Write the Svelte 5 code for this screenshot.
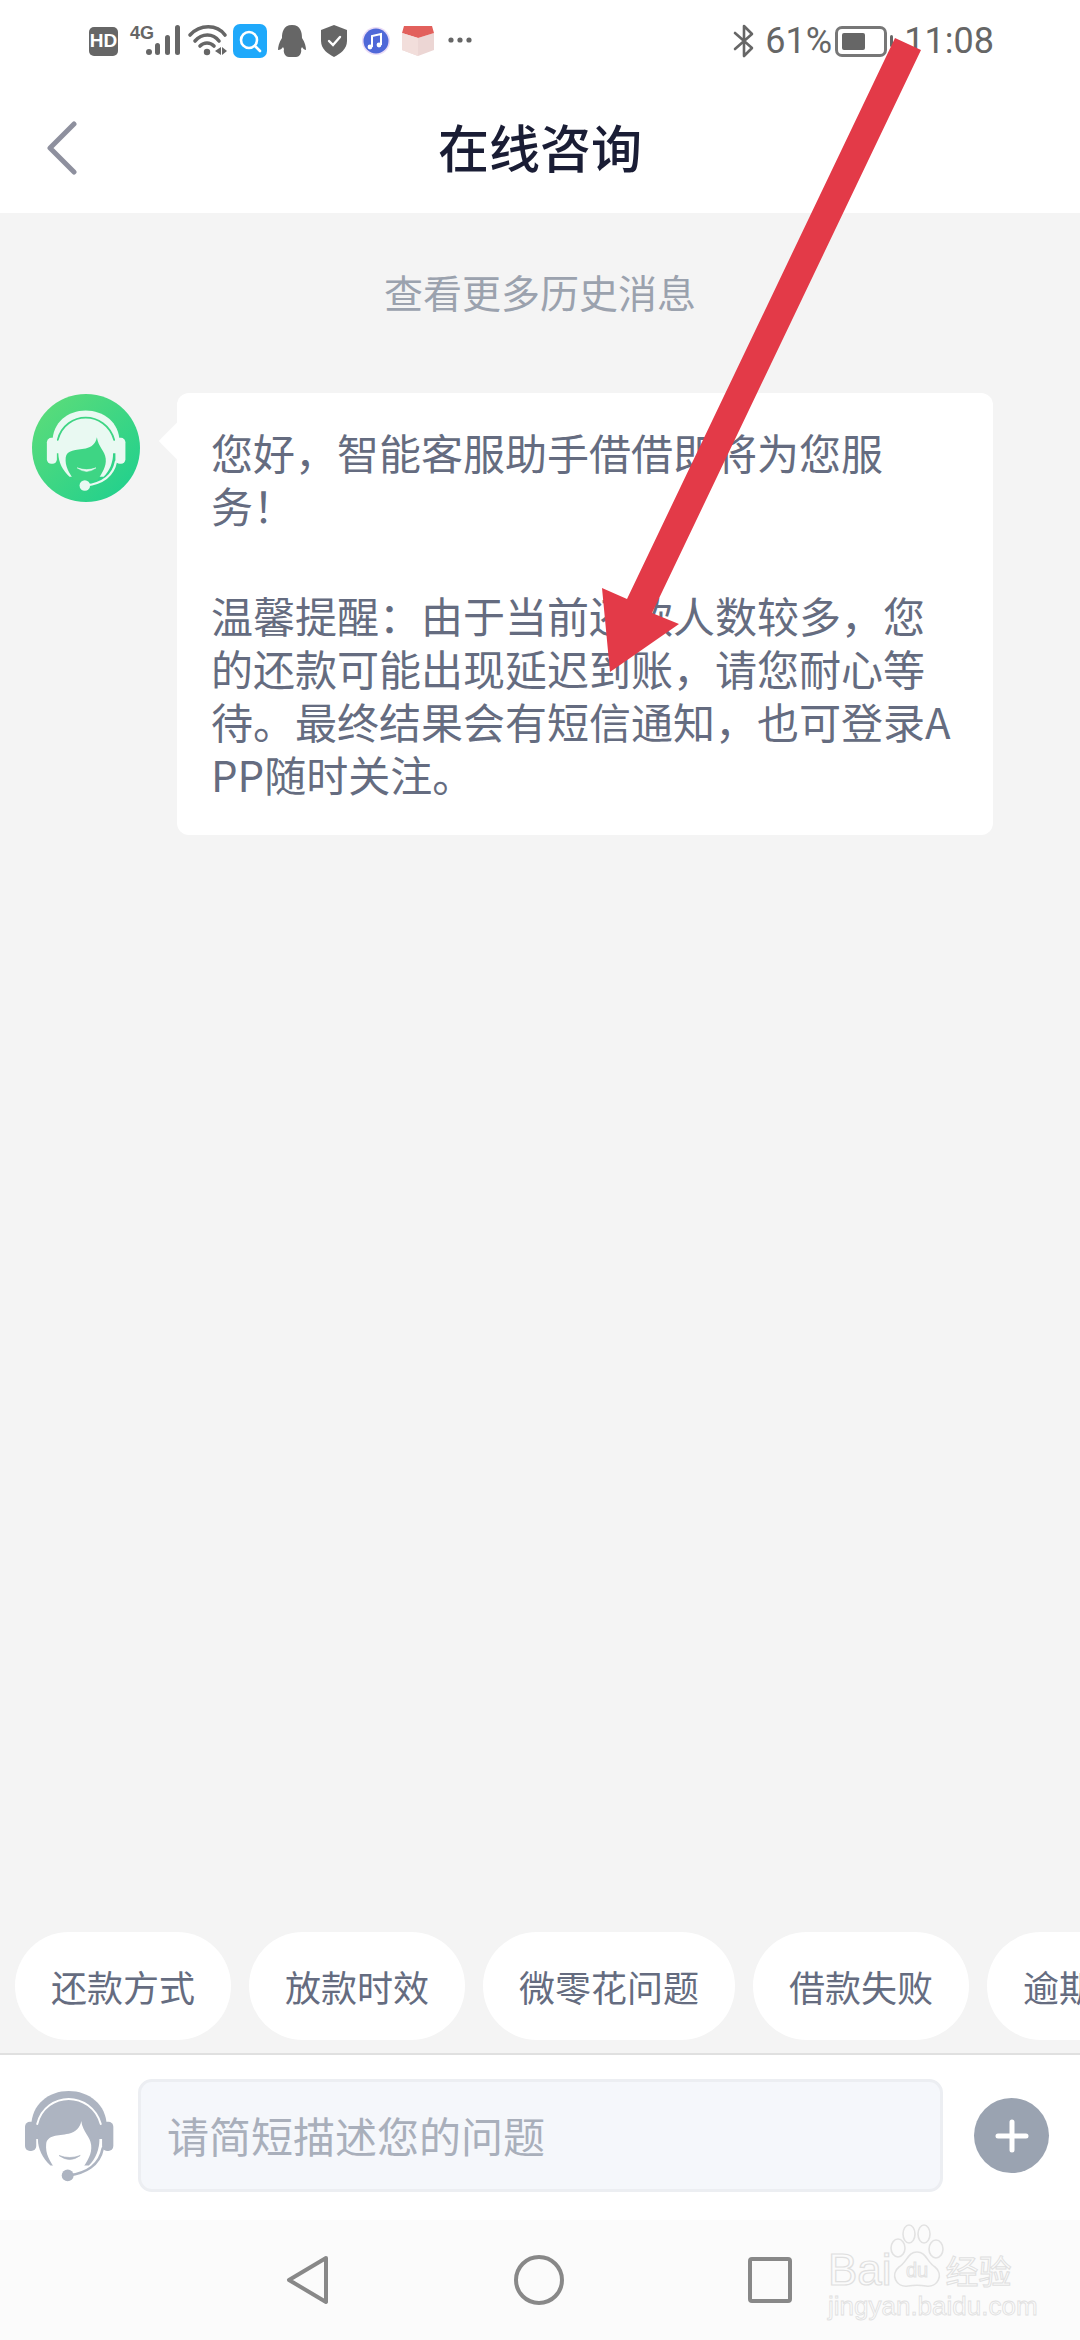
<script>
	const chips = ['还款方式', '放款时效', '微零花问题', '借款失败', '逾期问题'];
</script>

{#snippet agent(fg, bg)}
	<!-- headset girl, shared by the green avatar and the footer icon -->
	<path d="M92 262C92 195 145 155 205 155C265 155 320 195 320 262L320 300L92 300Z" fill={fg} />
	<path d="M110 255C122 205 165 179 205 179C245 179 288 205 302 255" fill="none" stroke={bg} stroke-width="6" stroke-linecap="round" />
	<path d="M112 300C112 232 150 192 205 192C260 192 298 232 298 300C298 330 288 358 266 380L150 380C126 358 112 330 112 300Z" fill={fg} />
	<path d="M137 315C140 288 172 290 205 284C226 280 240 266 243 246C248 280 270 292 273 318C276 345 262 366 245 392L165 392C148 366 134 345 137 315Z" fill={bg} />
	<path d="M176 350Q208 374 240 350Q208 362 176 350Z" fill={fg} stroke={fg} stroke-width="2" />
	<rect x="73" y="248" width="34" height="88" rx="15" fill={fg} />
	<rect x="306" y="248" width="34" height="88" rx="15" fill={fg} />
	<path d="M308 328C298 380 255 404 205 410" fill="none" stroke={fg} stroke-width="8" stroke-linecap="round" />
	<circle cx="202" cy="410" r="18" fill={fg} />
{/snippet}

<div class="page">
	<div class="top">
		<div class="status">
			<svg class="notify" width="390" height="42" viewBox="89 20 390 42">
				<rect x="89" y="27" width="29" height="29" rx="5" fill="#666" />
				<text x="103.5" y="47" class="hd">HD</text>
				<text x="130" y="39" class="net">4G</text>
				<g fill="#666">
					<circle cx="149" cy="52" r="3" />
					<rect x="155" y="43" width="5" height="12" rx="2.5" />
					<rect x="165" y="35" width="5" height="20" rx="2.5" />
					<rect x="175" y="25" width="5" height="30" rx="2.5" />
				</g>
				<g fill="none" stroke="#666" stroke-width="3.6" stroke-linecap="round">
					<path d="M190 35C200 24 217 24 225 35" />
					<path d="M195 41C202 33 213 33 219 41" />
					<path d="M200 46C204 42 210 42 214 46" />
				</g>
				<circle cx="207" cy="52" r="3.2" fill="#666" />
				<path d="M221 47L215 51L221 55ZM222 47L227 51L222 55Z" fill="#666" />
				<rect x="233" y="24" width="34" height="34" rx="7" fill="#1fa9fb" />
				<circle cx="249" cy="40" r="8" fill="none" stroke="#fff" stroke-width="2.6" />
				<path d="M255 46L260 51" stroke="#fff" stroke-width="2.6" stroke-linecap="round" />
				<path d="M292 25C283 25 282 33 282 38C279 42 278 47 278 50C280 50 282 49 283 47L284 49C283 52 285 57 289 57L296 57C300 57 302 52 301 49L302 47C303 49 305 50 306 50C306 47 305 42 302 38C302 33 301 25 292 25Z" fill="#666" />
				<path d="M334 25L347 30L347 41C347 49 340 54 334 57C328 54 321 49 321 41L321 30Z" fill="#666" />
				<path d="M329 41L333 45L340 37" fill="none" stroke="#fff" stroke-width="2.4" stroke-linecap="round" />
				<circle cx="376" cy="41" r="14" fill="#eadcf6" />
				<circle cx="376" cy="41" r="12.5" fill="#4f68d8" />
				<path d="M372 47V36L381 34V45" fill="none" stroke="#fff" stroke-width="2" />
				<circle cx="370" cy="47" r="2.4" fill="#fff" />
				<circle cx="379" cy="45" r="2.4" fill="#fff" />
				<path d="M402 33L418 38L434 33L434 50L418 56L402 50Z" fill="#ecd6d4" />
				<path d="M404 26L432 26L434 33L418 38L402 33Z" fill="#e2605c" />
				<path d="M402 33L418 38L418 56L402 50Z" fill="#f2dedb" />
				<g fill="#666">
					<circle cx="451" cy="40" r="2.6" />
					<circle cx="460" cy="40" r="2.6" />
					<circle cx="469" cy="40" r="2.6" />
				</g>
			</svg>
			<div class="sys">
				<svg width="22" height="34" viewBox="0 0 22 34">
					<path d="M2 9L19 24L11 32V2L19 10L2 25" fill="none" stroke="#666" stroke-width="2.6" stroke-linejoin="round" stroke-linecap="round" />
				</svg>
				<span class="pct">61%</span>
				<div class="battery"><div class="level"></div></div>
				<div class="nub"></div>
				<span class="time">11:08</span>
			</div>
		</div>
		<header>
			<svg class="back" width="30" height="54" viewBox="0 0 30 54">
				<path d="M27 3L3 27L27 51" fill="none" stroke="#8e909e" stroke-width="5" stroke-linecap="round" stroke-linejoin="round" />
			</svg>
			<h1>在线咨询</h1>
		</header>
	</div>

	<main>
		<div class="history">查看更多历史消息</div>
		<div class="msg">
			<svg class="avatar" width="108" height="108" viewBox="0 0 108 108">
				<defs>
					<linearGradient id="g" x1="0" y1="0" x2="1" y2="1">
						<stop offset="0" stop-color="#60dd78" />
						<stop offset="1" stop-color="#1ccf8f" />
					</linearGradient>
				</defs>
				<circle cx="54" cy="54" r="54" fill="url(#g)" />
				<svg x="14" y="15" width="80" height="83" viewBox="70 150 272 282">
					{@render agent('#e9f9f2', '#3ed584')}
				</svg>
			</svg>
			<div class="bubble">
				<p>您好，智能客服助手借借即将为您服务！</p>
				<p class="gap">温馨提醒：由于当前还款人数较多，您的还款可能出现延迟到账，请您耐心等待。最终结果会有短信通知，也可登录APP随时关注。</p>
			</div>
		</div>
		<div class="chips">
			{#each chips as c}
				<div class="chip">{c}</div>
			{/each}
		</div>
	</main>

	<footer>
		<svg class="me" width="90" height="94" viewBox="70 150 272 282">
			{@render agent('#adb4c1', '#fff')}
		</svg>
		<div class="input">请简短描述您的问题</div>
		<div class="plus">
			<svg width="34" height="34" viewBox="0 0 34 34">
				<path d="M17 3V31M3 17H31" stroke="#fff" stroke-width="5" stroke-linecap="round" />
			</svg>
		</div>
	</footer>

	<nav>
		<svg width="44" height="50" viewBox="0 0 44 50">
			<path d="M40 3L3 25L40 47Z" fill="none" stroke="#888" stroke-width="4" stroke-linejoin="round" />
		</svg>
		<svg width="50" height="50" viewBox="0 0 50 50">
			<circle cx="25" cy="25" r="23" fill="none" stroke="#888" stroke-width="4" />
		</svg>
		<svg width="44" height="46" viewBox="0 0 44 46">
			<rect x="2" y="2" width="40" height="42" rx="2" fill="none" stroke="#888" stroke-width="4" />
		</svg>
	</nav>

	<!-- baidu jingyan watermark over the nav bar -->
	<div class="mark">
		<div class="mark-row">
			<span class="bai">Bai</span>
			<svg class="paw" width="58" height="66" viewBox="0 0 58 66">
				<g fill="none" stroke="#e2e2e2" stroke-width="1.6">
					<ellipse cx="10" cy="24" rx="7" ry="9" />
					<ellipse cx="21" cy="10" rx="6" ry="9" />
					<ellipse cx="36" cy="10" rx="6" ry="9" />
					<ellipse cx="48" cy="25" rx="7" ry="9" />
					<path d="M29 28C20 28 19 38 11 43C2 50 8 64 20 62C26 61 32 61 38 62C50 64 56 50 47 43C39 38 38 28 29 28Z" />
				</g>
				<text x="29" y="53" class="du">du</text>
			</svg>
			<span class="jy">经验</span>
		</div>
		<div class="url">jingyan.baidu.com</div>
	</div>

	<!-- red annotation arrow drawn on the screenshot -->
	<svg class="arrow" width="1080" height="2340" viewBox="0 0 1080 2340">
		<path d="M895 38L921 50L652 613L679 624L610 672L602 588L627 599Z" fill="#e33a48" />
	</svg>
</div>

<style>
	:global(body) {
		margin: 0;
	}

	.page {
		position: relative;
		width: 1080px;
		height: 2340px;
		overflow: hidden;
		display: flex;
		flex-direction: column;
		background: #f4f4f4;
		font-family: "Noto Sans CJK SC", "Noto Sans", sans-serif;
	}

	.top {
		height: 213px;
		background: #fff;
		display: flex;
		flex-direction: column;
		flex: none;
	}

	.status {
		height: 82px;
		padding: 0 86px 0 89px;
		display: flex;
		align-items: center;
		justify-content: space-between;
		color: #666;
		font-family: Roboto, sans-serif;
		font-size: 36px;
	}

	.hd {
		font: 700 19px "Liberation Sans", sans-serif;
		fill: #fff;
		text-anchor: middle;
	}

	.net {
		font: 700 18px "Liberation Sans", sans-serif;
		fill: #666;
	}

	.sys {
		display: flex;
		align-items: center;
	}

	.pct {
		margin-left: 10px;
		width: 70px;
	}

	.battery {
		width: 52px;
		height: 31px;
		box-sizing: border-box;
		border: 3px solid #777;
		border-radius: 7px;
		padding: 4px;
	}

	.level {
		width: 60%;
		height: 100%;
		background: #666;
		border-radius: 2px;
	}

	.nub {
		width: 3px;
		height: 12px;
		margin-left: 3px;
		background: #666;
		border-radius: 2px;
	}

	.time {
		margin-left: 11px;
	}

	header {
		flex: 1;
		display: grid;
		grid-template-columns: 1fr auto 1fr;
		align-items: center;
	}

	.back {
		margin-left: 47px;
	}

	h1 {
		margin: 0;
		font-size: 51px;
		font-weight: 500;
		color: #1a1d35;
		line-height: 56px;
		padding-bottom: 4px;
	}

	main {
		flex: 1;
		display: flex;
		flex-direction: column;
		min-height: 0;
	}

	.history {
		margin-top: 53px;
		line-height: 50px;
		text-align: center;
		font-size: 39px;
		color: #9ba2ae;
	}

	.msg {
		margin-top: 77px;
		padding-left: 32px;
		display: flex;
		align-items: flex-start;
	}

	.avatar {
		flex: none;
		margin-top: 1px;
	}

	.bubble {
		position: relative;
		margin-left: 37px;
		width: 816px;
		box-sizing: border-box;
		padding: 32px 37px 35px 34px;
		background: #fff;
		border-radius: 12px;
		font-size: 42px;
		line-height: 53px;
		color: #656c80;
		word-break: break-all;
	}

	.bubble::before {
		content: "";
		position: absolute;
		left: -13px;
		top: 35px;
		width: 26px;
		height: 26px;
		background: #fff;
		transform: rotate(45deg);
	}

	.bubble p {
		position: relative;
		margin: 0;
	}

	.bubble .gap {
		margin-top: 57px;
	}

	.chips {
		margin-top: auto;
		padding: 0 0 13px 15px;
		display: flex;
		gap: 18px;
		white-space: nowrap;
		overflow: hidden;
	}

	.chip {
		flex: none;
		height: 108px;
		line-height: 108px;
		padding: 0 36px;
		border-radius: 54px;
		background: #fff;
		font-size: 36px;
		color: #656c80;
	}

	footer {
		flex: none;
		height: 167px;
		box-sizing: border-box;
		border-top: 2px solid #e0e0e0;
		background: #fff;
		padding: 0 31px 4px 24px;
		display: flex;
		align-items: center;
	}

	.me {
		flex: none;
	}

	.input {
		margin-left: 24px;
		width: 807px;
		height: 113px;
		box-sizing: border-box;
		border: 3px solid #eceef2;
		border-radius: 14px;
		background: #f5f7fb;
		padding-left: 26px;
		line-height: 105px;
		font-size: 42px;
		color: #a9afbb;
	}

	.plus {
		margin-left: 31px;
		width: 75px;
		height: 75px;
		border-radius: 50%;
		background: #9aa3b1;
		display: flex;
		align-items: center;
		justify-content: center;
	}

	nav {
		flex: none;
		height: 120px;
		background: #fbfbfb;
		display: grid;
		grid-template-columns: repeat(3, auto);
		justify-content: start;
		align-items: center;
		column-gap: 184px;
		padding-left: 286px;
	}

	.mark {
		position: absolute;
		left: 828px;
		top: 2224px;
		width: 200px;
	}

	.mark-row {
		height: 66px;
		display: flex;
		align-items: flex-end;
	}

	.bai {
		font: 400 44px/40px "Liberation Sans", sans-serif;
		color: transparent;
		-webkit-text-stroke: 1.2px #e0e0e0;
	}

	.paw {
		flex: none;
		margin-left: -4px;
	}

	.du {
		font: 400 20px "Liberation Sans", sans-serif;
		fill: none;
		stroke: #e2e2e2;
		stroke-width: 1;
		text-anchor: middle;
	}

	.jy {
		font-size: 33px;
		line-height: 40px;
		color: transparent;
		-webkit-text-stroke: 1px #e0e0e0;
	}

	.url {
		margin-top: 2px;
		font: 400 26px/28px "Liberation Sans", sans-serif;
		color: transparent;
		-webkit-text-stroke: 0.8px #e0e0e0;
	}

	.arrow {
		position: absolute;
		left: 0;
		top: 0;
		pointer-events: none;
	}
</style>
